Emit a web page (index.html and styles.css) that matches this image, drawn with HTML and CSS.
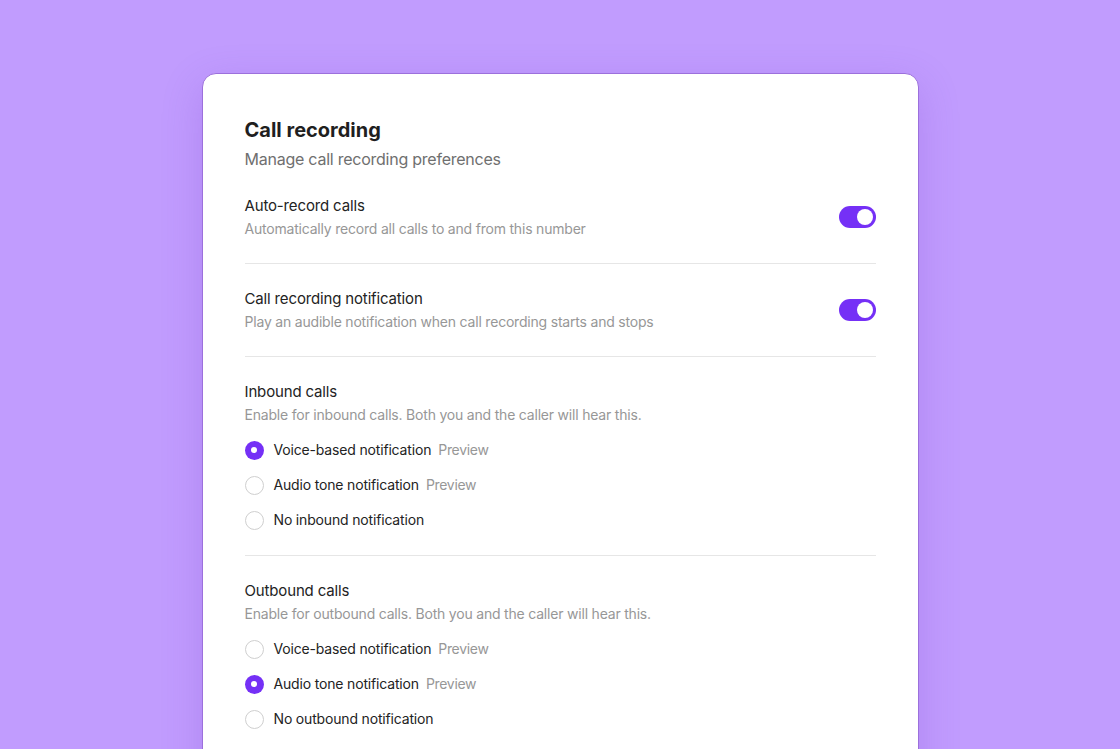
FILE: index.html
```html
<!DOCTYPE html>
<html lang="en">
<head>
<meta charset="utf-8">
<title>Call recording</title>
<link rel="stylesheet" href="styles.css">
</head>
<body>
<main class="page">
  <section class="card">
    <header class="card-head">
      <h1 class="title">Call recording</h1>
      <p class="subtitle">Manage call recording preferences</p>
    </header>

    <div class="row">
      <div class="row-text">
        <div class="label">Auto-record calls</div>
        <div class="desc">Automatically record all calls to and from this number</div>
      </div>
      <span class="toggle on"><span class="knob"></span></span>
    </div>

    <div class="row">
      <div class="row-text">
        <div class="label">Call recording notification</div>
        <div class="desc">Play an audible notification when call recording starts and stops</div>
      </div>
      <span class="toggle on"><span class="knob"></span></span>
    </div>

    <div class="row group">
      <div class="row-text">
        <div class="label">Inbound calls</div>
        <div class="desc">Enable for inbound calls. Both you and the caller will hear this.</div>
      </div>
      <ul class="radios">
        <li class="radio-item"><span class="radio checked"></span><span class="radio-label">Voice-based notification</span><span class="preview">Preview</span></li>
        <li class="radio-item"><span class="radio"></span><span class="radio-label">Audio tone notification</span><span class="preview">Preview</span></li>
        <li class="radio-item"><span class="radio"></span><span class="radio-label">No inbound notification</span></li>
      </ul>
    </div>

    <div class="row group last">
      <div class="row-text">
        <div class="label">Outbound calls</div>
        <div class="desc">Enable for outbound calls. Both you and the caller will hear this.</div>
      </div>
      <ul class="radios">
        <li class="radio-item"><span class="radio"></span><span class="radio-label">Voice-based notification</span><span class="preview">Preview</span></li>
        <li class="radio-item"><span class="radio checked"></span><span class="radio-label">Audio tone notification</span><span class="preview">Preview</span></li>
        <li class="radio-item"><span class="radio"></span><span class="radio-label">No outbound notification</span></li>
      </ul>
    </div>
  </section>
</main>
</body>
</html>
```

FILE: styles.css
```css
* { box-sizing: border-box; }
html, body {
  margin: 0;
  padding: 0;
  height: 100%;
  overflow: hidden;
}
body {
  background: #c19cfe;
  font-family: Inter, "Noto Sans", "Liberation Sans", sans-serif;
  color: #222;
  -webkit-font-smoothing: antialiased;
}
.page {
  display: flex;
  justify-content: center;
  padding-top: 73px;
}
.card {
  width: 717px;
  background: #fff;
  border: 1px solid #9c70dc;
  border-radius: 14px;
  padding: 42px 42px 60px;
  box-shadow: 0 12px 40px rgba(112, 56, 200, 0.22);
}
.title {
  margin: 0;
  font-size: 20px;
  line-height: 28px;
  font-weight: 700;
  color: #1f1f1f;
  letter-spacing: 0;
}
.subtitle {
  margin: 3px 0 0;
  font-size: 16px;
  line-height: 24px;
  color: #6f6f6f;
  letter-spacing: -0.24px;
}
.row {
  display: flex;
  align-items: center;
  justify-content: space-between;
  padding: 24px 0 24px;
  border-bottom: 1px solid #e6e6e6;
}
.row.group {
  flex-direction: column;
  align-items: stretch;
}
.row.last { border-bottom: none; }
.label {
  font-size: 15px;
  line-height: 22px;
  color: #232323;
  letter-spacing: -0.15px;
}
.desc {
  margin-top: 2px;
  font-size: 14px;
  line-height: 20px;
  color: #979797;
  letter-spacing: -0.2px;
}
.toggle {
  position: relative;
  flex: none;
  width: 37px;
  height: 22px;
  border-radius: 11px;
  background: #7530f6;
}
.toggle .knob {
  position: absolute;
  top: 3px;
  right: 3px;
  width: 16px;
  height: 16px;
  border-radius: 50%;
  background: #fff;
}
.radios {
  list-style: none;
  margin: 14px 0 0;
  padding: 0;
  display: flex;
  flex-direction: column;
  gap: 13px;
}
.radio-item {
  display: flex;
  align-items: center;
  height: 22px;
}
.radio {
  flex: none;
  width: 19px;
  height: 19px;
  border-radius: 50%;
  border: 1.5px solid #cfcfcf;
  margin-right: 10px;
  background: #fff;
}
.radio.checked {
  border: none;
  background: #7530f6;
  display: flex;
  align-items: center;
  justify-content: center;
}
.radio.checked::after {
  content: "";
  width: 6px;
  height: 6px;
  border-radius: 50%;
  background: #fff;
}
.radio-label {
  font-size: 14px;
  line-height: 22px;
  color: #232323;
  letter-spacing: -0.17px;
}
.preview {
  margin-left: 7px;
  font-size: 14px;
  line-height: 22px;
  color: #979797;
  letter-spacing: -0.3px;
}
```
